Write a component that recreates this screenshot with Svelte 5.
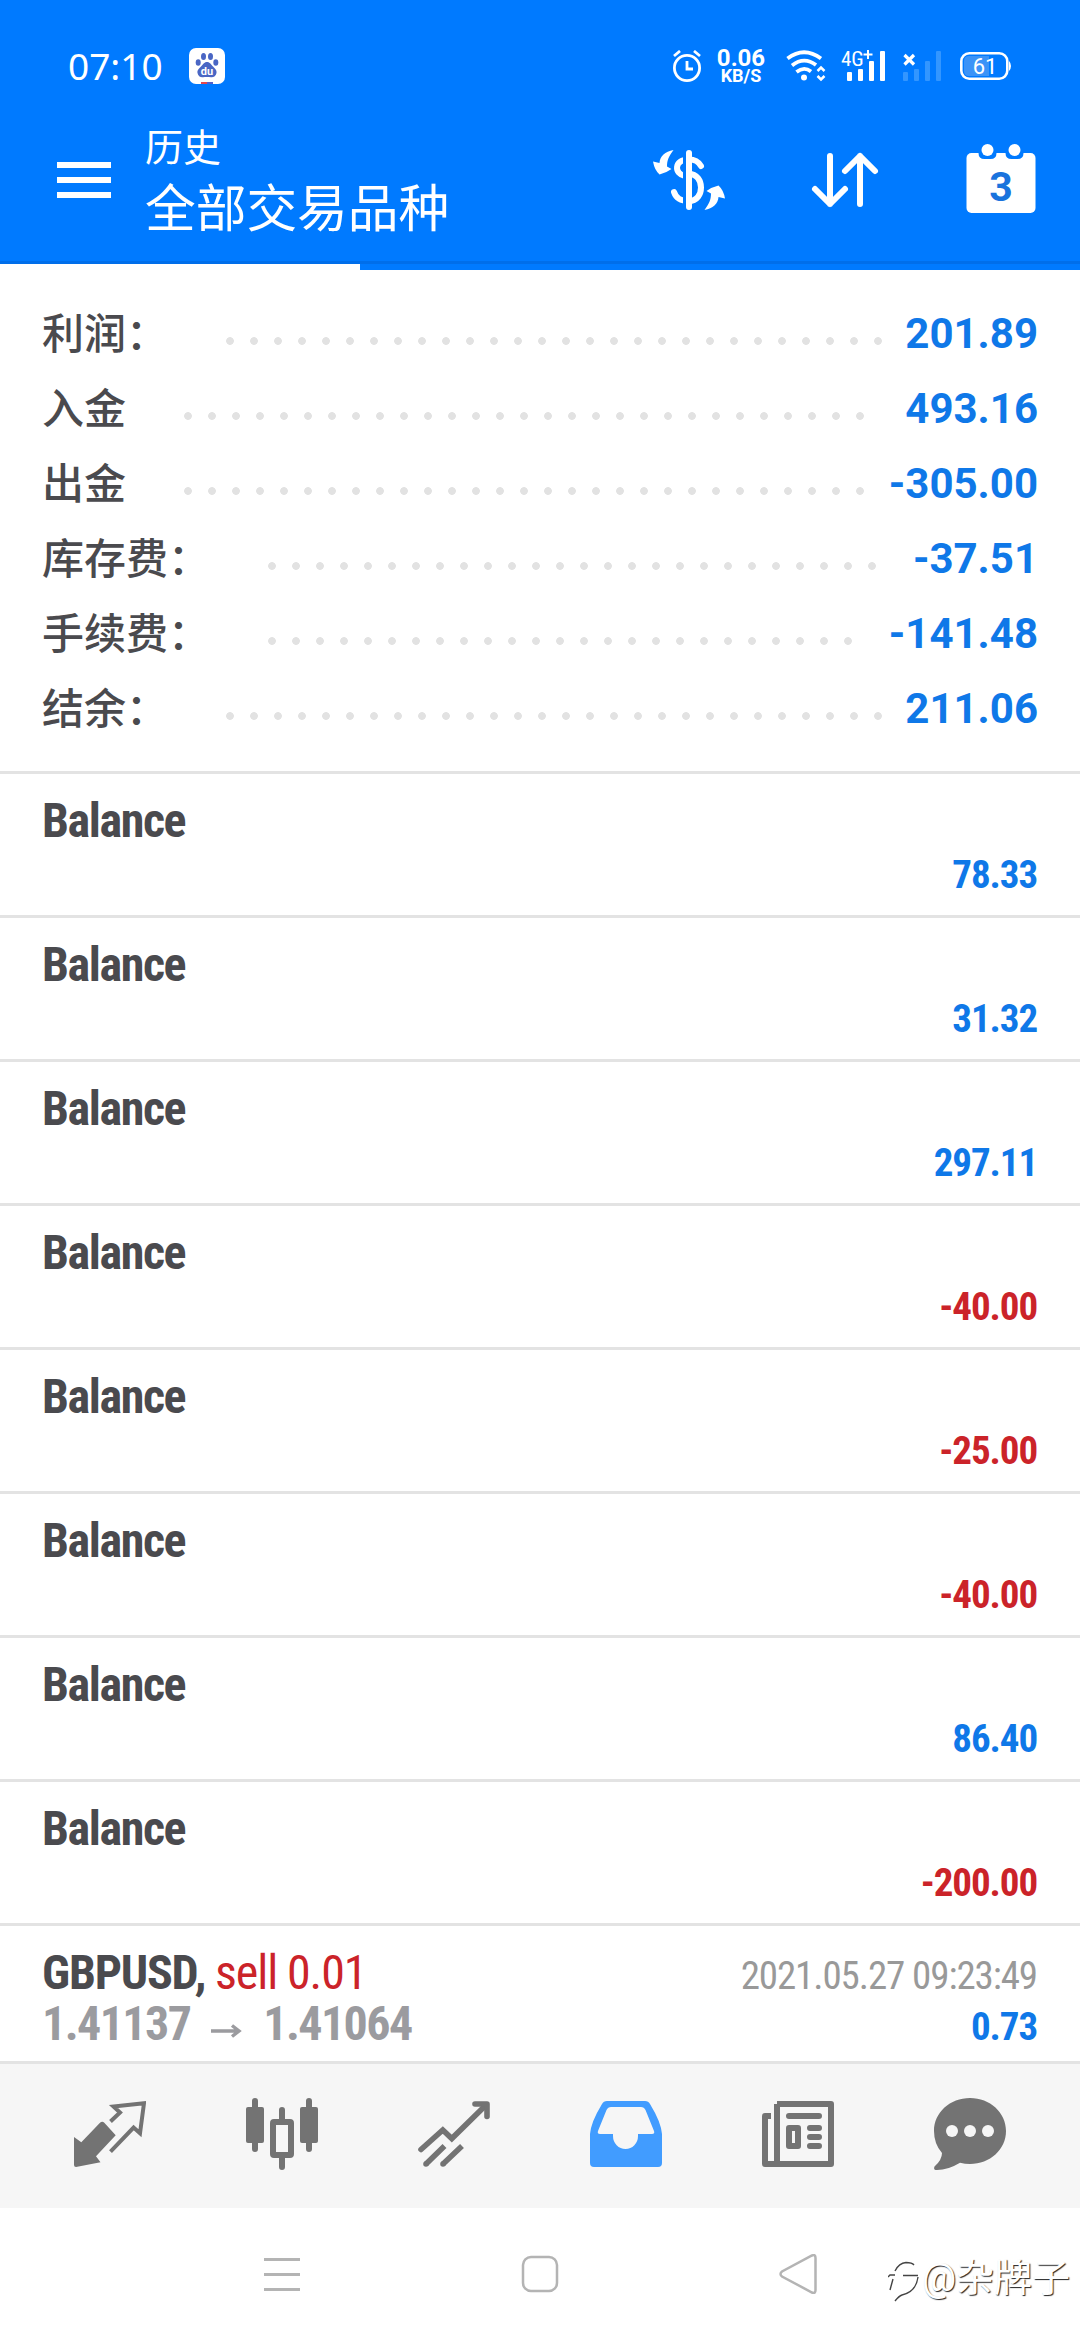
<script lang="ts">
  type Summary = { label: string; value: string; dots: number };

  const summary: Summary[] = [
    { label: '利润：', value: '201.89', dots: 28 },
    { label: '入金', value: '493.16', dots: 29 },
    { label: '出金', value: '-305.00', dots: 29 },
    { label: '库存费：', value: '-37.51', dots: 26 },
    { label: '手续费：', value: '-141.48', dots: 25 },
    { label: '结余：', value: '211.06', dots: 28 }
  ];

  const balances = ['78.33', '31.32', '297.11', '-40.00', '-25.00', '-40.00', '86.40', '-200.00'];
</script>

<div class="screen">
  <header>
    <div class="status">
      <span class="time">07:10</span>
      <svg class="baidu" width="36" height="36" viewBox="0 0 36 36">
        <rect width="36" height="36" rx="7" fill="#fff" />
        <g fill="#4a66c4">
          <ellipse cx="14.5" cy="8.5" rx="2.5" ry="3.6" />
          <ellipse cx="21.5" cy="8.5" rx="2.5" ry="3.6" />
          <ellipse cx="9.2" cy="14.5" rx="2.5" ry="3.3" />
          <ellipse cx="26.8" cy="14.5" rx="2.5" ry="3.3" />
          <path d="M18 14c3 0 4 2.500 6 4.500s4 3.500 3.500 6.500-3 4.500-5.500 4.200-5.500-.4-8 0-5-1.200-5.500-4.200 1.500-4.500 3.500-6.500S15 14 18 14z" />
        </g>
        <text x="18" y="27" text-anchor="middle" class="du">du</text>
        <path d="M12 34h6v2h-6z" fill="#e5484d" />
        <path d="M18 34h6v2h-6z" fill="#5460c8" />
      </svg>
      <div class="indicators">
        <svg class="alarm" width="30" height="32" viewBox="0 0 30 32" fill="none" stroke="#fff" stroke-width="2.8">
          <circle cx="15" cy="18" r="12.6" />
          <path d="M15 11v8h6M2 6l6-5M28 6l-6-5" />
        </svg>
        <div class="speed">
          <span class="rate">0.06</span>
          <span class="unit">KB/S</span>
        </div>
        <svg class="wifi" width="40" height="32" viewBox="0 0 40 32" fill="none" stroke="#fff" stroke-width="3.8">
          <path d="M1.500 8.500Q18 -4 35 8.500" />
          <path d="M6 15.500Q18 6 30 15" />
          <path d="M10.500 22Q18 16 25 21.500" />
          <circle cx="18" cy="27.5" r="3" fill="#fff" stroke="none" />
          <path d="M31.500 21l3.500-3.500 3.500 3.500M31.500 26l3.500 3.500 3.500-3.500" stroke-width="2.5" />
        </svg>
        <svg class="cell" width="46" height="32" viewBox="0 0 46 32">
          <text x="0" y="16" class="net">4G</text>
          <path d="M22.500 4.500h9M27 0v9" stroke="#fff" stroke-width="2" />
          <g fill="#fff">
            <rect x="6" y="22" width="5" height="9" rx="1" />
            <rect x="17" y="19" width="5" height="12" rx="1" />
            <rect x="28" y="11" width="5" height="20" rx="1" />
            <rect x="39" y="1" width="5" height="30" rx="1" />
          </g>
        </svg>
        <svg class="nosim" width="40" height="32" viewBox="0 0 40 32">
          <path d="M1.500 5l9.500 9.500M11 5L1.500 14.500" stroke="#fff" stroke-width="3.2" />
          <g fill="#3396ff">
            <rect x="0" y="22" width="5" height="9" rx="1" />
            <rect x="11" y="19" width="5" height="12" rx="1" />
            <rect x="22" y="11" width="5" height="20" rx="1" />
            <rect x="33" y="1" width="5" height="30" rx="1" />
          </g>
        </svg>
        <svg class="battery" width="52" height="28" viewBox="0 0 52 28">
          <rect x="1.3" y="1.3" width="46" height="25.4" rx="8" fill="none" stroke="#fff" stroke-width="2.6" />
          <path d="M9 4h20v20H9q-5 0-5-5V9q0-5 5-5z" fill="#3b93f7" />
          <path d="M49 9q2 2 2 5t-2 5z" fill="#fff" />
          <text x="25" y="22" text-anchor="middle" class="charge">61</text>
        </svg>
      </div>
    </div>

    <div class="toolbar">
      <button class="menu" aria-label="Menu">
        <span></span>
        <span></span>
        <span></span>
      </button>
      <div class="titles">
        <h2>历史</h2>
        <h1>全部交易品种</h1>
      </div>
      <div class="actions">
        <button aria-label="Symbols">
          <svg width="72" height="72" viewBox="0 0 72 72" fill="none" stroke-width="6">
            <path d="M48 22C45 17 42 15.500 36 15.500 20.500 15.500 21 30 32 32M36 30C52 30 52 57 36 57 27 57 23 54 21 48" stroke="#fff" stroke-linecap="round" />
            <path d="M31.500 8v56" stroke="#007aff" stroke-width="3" />
            <path d="M36 9v54" stroke="#fff" stroke-linecap="round" />
            <path id="turn" d="M20.500 6C12 7.500 7 12 6.500 19L0 17.500Q1.500 26 6.500 30.500 13 29 18.500 25L14 22.500C14 16 16 12 20.500 6z" fill="#fff" />
            <use href="#turn" transform="rotate(180 36 36)" />
          </svg>
        </button>
        <button aria-label="Sort">
          <svg width="72" height="72" viewBox="0 0 72 72" fill="none" stroke="#fff" stroke-width="6" stroke-linecap="round" stroke-linejoin="round">
            <path d="M21 12v48M6 45l15 15 15-15" />
            <path d="M51 60V12M36 27l15-15 15 15" />
          </svg>
        </button>
        <button aria-label="Period">
          <svg width="72" height="72" viewBox="0 0 72 72">
            <rect x="1.5" y="9" width="69" height="60" rx="5" fill="#fff" />
            <path d="M13.500 8v1q0 6 6 6h6q6 0 6-6V8zM40.500 8v1q0 6 6 6h6q6 0 6-6V8z" fill="#007aff" />
            <circle cx="22.5" cy="6" r="6" fill="#fff" />
            <circle cx="49.5" cy="6" r="6" fill="#fff" />
            <text x="36" y="56.5" text-anchor="middle" class="day">3</text>
          </svg>
        </button>
      </div>
    </div>

    <div class="tabs"><span></span></div>
  </header>

  <section class="summary">
    {#each summary as row}
      <div class="line">
        <span class="label">{row.label}</span>
        <span class="dots" style="width: {row.dots * 24}px"></span>
        <span class="value">{row.value}</span>
      </div>
    {/each}
  </section>

  <main>
    {#each balances as amount}
      <article class="balance">
        <strong>Balance</strong>
        <span class="amount" class:negative={amount.startsWith('-')}>{amount}</span>
      </article>
    {/each}
    <article class="deal">
      <div class="row">
        <span class="symbol"><b>GBPUSD,</b> <em>sell 0.01</em></span>
        <time>2021.05.27 09:23:49</time>
      </div>
      <div class="row prices">
        <span class="price">
          1.41137
          <svg width="31" height="14" viewBox="0 0 31 14" fill="none" stroke="#9b9b9f" stroke-width="3.4">
            <path d="M0 7h27M21 1.500l7 5.500-7 5.500" />
          </svg>
          1.41064
        </span>
        <span class="amount">0.73</span>
      </div>
    </article>
  </main>

  <nav class="bottom-nav">
    <button aria-label="Quotes">
      <svg width="72" height="72" viewBox="0 0 72 72">
        <path d="M0 39l7.300 5.300L26 24.700q2.300-2 4.300 0l11.400 12.600-19.700 21 4.500 6L2 69q-2 0-2-2z" fill="#737373" />
        <path d="M36.500 23.500l9.500-9-6.500-6L70 5.200l-4 30-6.400-5.600-23.100 24" fill="none" stroke="#737373" stroke-width="4" />
      </svg>
    </button>
    <button aria-label="Charts">
      <svg width="72" height="72" viewBox="0 0 72 72">
        <path d="M9 3v48M63 3v48M36 12v12M36 60v9" stroke="#737373" stroke-width="6" stroke-linecap="round" />
        <rect y="9" width="18" height="36" rx="2" fill="#737373" />
        <rect x="54" y="9" width="18" height="36" rx="2" fill="#737373" />
        <rect x="27" y="24" width="18" height="33" rx="1" fill="none" stroke="#737373" stroke-width="6" />
      </svg>
    </button>
    <button aria-label="Trade">
      <svg width="72" height="72" viewBox="0 0 72 72" fill="none" stroke="#737373" stroke-width="5.6">
        <path d="M3 51.500l21.800-19.500 9 8.500L68 7" stroke-linecap="round" />
        <path d="M57 6h12v12.500" stroke-linecap="round" stroke-linejoin="round" />
        <path d="M8 66l18.500-18M25 66l19-18" />
        <path d="M8 66h.01M25 66h.01" stroke-linecap="round" />
      </svg>
    </button>
    <button class="active" aria-label="History">
      <svg width="72" height="72" viewBox="0 0 72 72">
        <path d="M17 3h38q3.500 0 5 3 11 18 12 30v29q0 4-4 4H4q-4 0-4-4V36Q1 24 12 6q1.500-3 5-3zM21 9q-3 0-4.500 3L8 33q-1 3 2 3h13v2a12.500 13 0 0 0 25 0v-2h14q3 0 2-3l-8.500-21Q54 9 51 9z" fill="#419cff" fill-rule="evenodd" />
      </svg>
    </button>
    <button aria-label="News">
      <svg width="72" height="72" viewBox="0 0 72 72" fill="none" stroke="#737373" stroke-width="6">
        <path d="M15 6h54v60H3V18h6M15 6v60" stroke-linejoin="round" />
        <path d="M27 18h30M48 30h9M48 39h9M48 48h9" stroke-linecap="round" />
        <rect x="27" y="30" width="9" height="18" stroke-linejoin="round" />
      </svg>
    </button>
    <button aria-label="Messages">
      <svg width="72" height="72" viewBox="0 0 72 72">
        <path d="M36 0C56 0 72 14.500 72 33S56 66 36 66q-5 0-10-1.300Q14 72 3 72q-4 0-2.500-3.500Q8 62 8 55 0 46 0 33C0 14.500 16 0 36 0z" fill="#737373" />
        <g fill="#f6f6f6">
          <circle cx="18" cy="33" r="6" />
          <circle cx="36" cy="33" r="6" />
          <circle cx="54" cy="33" r="6" />
        </g>
      </svg>
    </button>
  </nav>

  <footer>
    <svg width="40" height="40" viewBox="0 0 40 40" fill="none" stroke="#b4b4b4" stroke-width="3">
      <path d="M2 5.500h36M2 20.500h36M2 35.500h36" />
    </svg>
    <svg width="40" height="40" viewBox="0 0 40 40" fill="none" stroke="#b4b4b4" stroke-width="2.5">
      <rect x="3" y="3" width="34" height="34" rx="8" />
    </svg>
    <svg width="40" height="40" viewBox="0 0 40 40" fill="none" stroke="#b4b4b4" stroke-width="2.5">
      <path d="M34 1.500Q37.500 0 37.500 4v32q0 4-3.500 2.500L4 22.500Q1 20 4 17.500z" />
    </svg>
    <div class="watermark">
      <svg width="34" height="46" viewBox="0 0 34 46" fill="none" stroke="#444" stroke-width="1.4">
        <path d="M7 13Q11 5 18 4.500 24 4.500 26 7M0 19l2-2h5M5 21L2 32M15 17.500h15" />
        <path d="M30 19Q28 34 14 37q-3 1-7 6" />
      </svg>
      <span>@杂牌子</span>
    </div>
  </footer>
</div>

<style>
  :global(body) {
    margin: 0;
    background: #fff;
  }

  .screen {
    display: flex;
    flex-direction: column;
    width: 1080px;
    height: 2340px;
    overflow: hidden;
    background: #fff;
    color: #4a4a4e;
    font-family: Roboto, 'Noto Sans CJK SC', sans-serif;
  }

  button {
    display: block;
    padding: 0;
    border: none;
    background: none;
  }

  svg {
    display: block;
  }

  header {
    display: flex;
    flex-direction: column;
    height: 270px;
    background: #007aff;
    color: #fff;
  }

  .status {
    display: flex;
    align-items: center;
    height: 132px;
    padding: 0 68px;
    box-sizing: border-box;
  }

  .time {
    width: 121px;
    font: 37px/40px 'Noto Sans', sans-serif;
  }

  .du {
    font: bold 11px Roboto, sans-serif;
    fill: #fff;
  }

  .indicators {
    display: flex;
    align-items: center;
    margin-left: auto;
  }

  .speed {
    display: flex;
    flex-direction: column;
    align-items: center;
    width: 52px;
    margin: 0 19px 0 13px;
    font-weight: 700;
  }

  .rate {
    font-size: 24px;
    line-height: 20px;
  }

  .unit {
    font-size: 18px;
    line-height: 16px;
  }

  .cell {
    margin-left: 15px;
    overflow: visible;
  }

  .net {
    font: 21px Roboto, sans-serif;
    font-stretch: 75%;
    fill: #fff;
  }

  .nosim {
    margin-left: 16px;
  }

  .battery {
    margin-left: 17px;
  }

  .charge {
    font: 400 22px Roboto, sans-serif;
    fill: #fff;
  }

  .toolbar {
    display: flex;
    align-items: flex-start;
    height: 129px;
    padding: 0 43px 0 57px;
  }

  .menu {
    display: flex;
    flex-direction: column;
    gap: 9px;
    width: 54px;
    height: 36px;
    margin-top: 30px;
  }

  .menu span {
    width: 54px;
    height: 6px;
    background: #fff;
  }

  .titles {
    margin-left: 34px;
  }

  .titles h2,
  .titles h1 {
    margin: 0;
    font-weight: 400;
  }

  .titles h2 {
    margin-top: -11px;
    font-size: 38px;
    line-height: 54px;
  }

  .titles h1 {
    margin-top: 5px;
    font-size: 50.7px;
    line-height: 60px;
  }

  .actions {
    display: flex;
    gap: 84px;
    margin: 12px 0 0 auto;
  }

  .day {
    font: bold 41px Roboto, sans-serif;
    fill: #1a73dd;
  }

  .tabs {
    height: 6px;
    border-top: 3px solid #006eea;
  }

  .tabs span {
    display: block;
    width: 360px;
    height: 6px;
    background: #fff;
  }

  .summary {
    height: 501px;
    padding: 27px 42px 0;
    box-sizing: border-box;
  }

  .line {
    display: flex;
    align-items: center;
    height: 75px;
  }

  .label {
    font-size: 42px;
    font-weight: 500;
    line-height: 60px;
  }

  .dots {
    height: 8px;
    margin: 13px 0 0 50px;
    background: radial-gradient(circle at 12px 4px, #e2e2e2 3.5px, transparent 4.2px) 0 0 / 24px 8px;
  }

  .value {
    margin: 0 0 2px auto;
    color: #0f78e8;
    font-size: 42px;
    font-weight: 700;
  }

  main {
    display: flex;
    flex-direction: column;
    height: 1290px;
    overflow: hidden;
    font-stretch: 75%;
    letter-spacing: -1.4px;
  }

  article {
    flex: none;
    height: 141px;
    padding: 0 43px 0 42px;
    border-top: 3px solid #e3e3e3;
  }

  .balance {
    display: flex;
    flex-direction: column;
  }

  .balance strong {
    margin-top: 19px;
    font-size: 48px;
    line-height: 56px;
  }

  .amount {
    align-self: flex-end;
    margin-top: 3px;
    color: #0f78e8;
    font-size: 39px;
    font-weight: 700;
    letter-spacing: -1.1px;
    line-height: 46px;
  }

  .amount.negative {
    color: #cb2329;
  }

  .row {
    display: flex;
    align-items: baseline;
    justify-content: space-between;
    height: 56px;
    font-size: 48px;
    line-height: 56px;
  }

  .deal .row:first-child {
    margin-top: 19px;
  }

  .deal .amount {
    align-self: auto;
    margin-top: 0;
  }

  em {
    color: #cb2329;
    font-style: normal;
    letter-spacing: -1.1px;
  }

  time {
    color: #999;
    font-size: 39px;
    letter-spacing: -1.1px;
  }

  .symbol {
    letter-spacing: -1.2px;
  }

  .prices {
    margin-top: -5px;
  }

  .price {
    display: flex;
    align-items: center;
    gap: 21px;
    color: #9b9b9f;
    font-weight: 700;
    letter-spacing: -1.6px;
  }

  .price svg {
    margin-top: 13px;
  }

  .bottom-nav {
    display: flex;
    justify-content: space-between;
    height: 110px;
    padding: 34px 74px 0;
    border-top: 3px solid #e3e3e3;
    background: #f6f6f6;
  }

  .bottom-nav button {
    height: 72px;
  }

  footer {
    display: flex;
    align-items: center;
    height: 132px;
    padding-left: 262px;
  }

  footer > svg {
    margin-right: 218px;
  }

  footer > svg:nth-of-type(3) {
    margin-right: 70px;
  }

  .watermark {
    display: flex;
    align-items: center;
    margin-top: 8px;
    color: #fff;
    font-size: 38px;
    line-height: 46px;
    text-shadow: 1px 1px 1px #222;
    white-space: nowrap;
  }

  .watermark svg {
    margin-top: 6px;
  }
</style>
